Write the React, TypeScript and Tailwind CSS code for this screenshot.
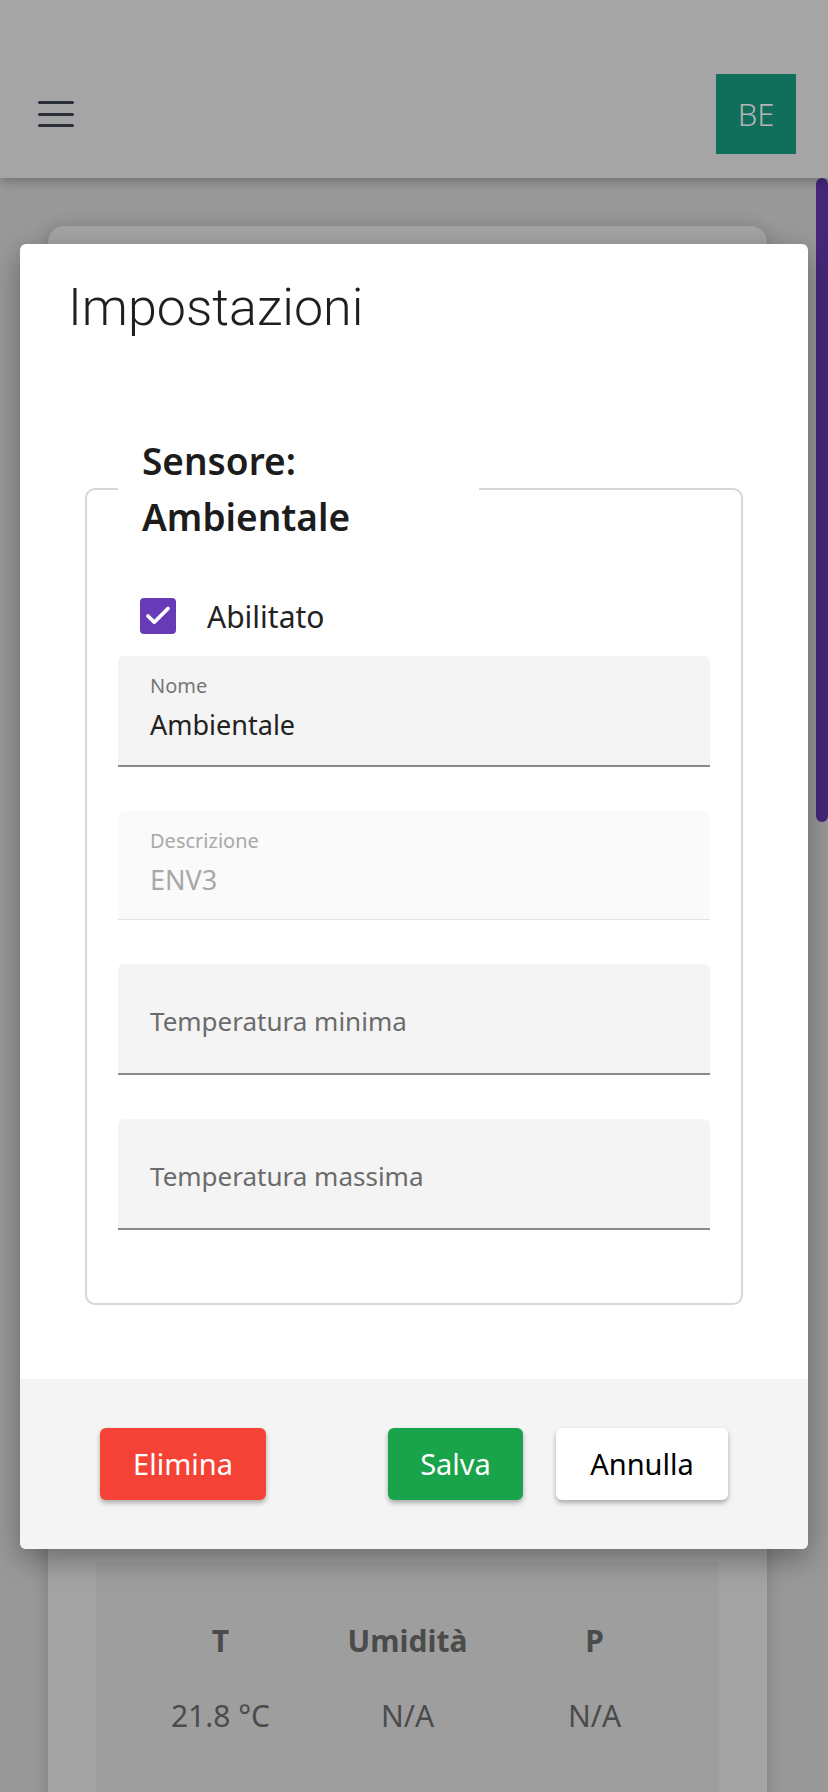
import { Check } from 'lucide-react';

const body = "font-['Noto_Sans',sans-serif]";

function Field({ label, value, disabled }: { label?: string; value?: string; disabled?: boolean }) {
  if (!label) {
    return (
      <div className="h-[111px] rounded-t-md bg-[#f4f4f4] border-b-2 border-[#8a8a8a] flex items-center pt-[4px] px-[32px]">
        <span className="text-[26px] leading-[32px] text-[#6b6b6b]">{value}</span>
      </div>
    );
  }
  return (
    <div
      className={
        disabled
          ? 'h-[109px] rounded-t-md bg-[#fafafa] border-b border-[#e2e2e2] px-[32px] pt-[20px]'
          : 'h-[111px] rounded-t-md bg-[#f4f4f4] border-b-2 border-[#8a8a8a] px-[32px] pt-[20px]'
      }
    >
      <div className={disabled ? 'text-[20px] leading-[20px] text-[#a8a8a8]' : 'text-[20px] leading-[20px] text-[#777777]'}>
        {label}
      </div>
      <div className={disabled ? 'mt-[13px] text-[27px] leading-[32px] text-[#a8a8a8]' : 'mt-[13px] text-[27px] leading-[32px] text-[#222222]'}>
        {value}
      </div>
    </div>
  );
}

export default function App() {
  return (
    <div className={`relative h-[1792px] overflow-hidden bg-[#999999] ${body}`}>
      {/* app behind the dialog, dimmed */}
      <header className="relative z-10 h-[178px] bg-[#a5a5a5] shadow-[0_4px_10px_rgba(0,0,0,0.25)] pt-[50px] pl-[38px] pr-[32px] flex items-center justify-between">
        <div className="flex flex-col gap-[8.5px] w-[36px]">
          <span className="h-[3px] rounded-full bg-[#2b303b]" />
          <span className="h-[3px] rounded-full bg-[#2b303b]" />
          <span className="h-[3px] rounded-full bg-[#2b303b]" />
        </div>
        <div className="w-[80px] h-[80px] bg-[#116e5b] flex items-center justify-center text-[31px] font-light text-[#b4b4b4]">
          BE
        </div>
      </header>

      <div className="flex">
        <main className="flex-1 pt-[48px] pl-[48px] pr-[49px]">
          <div className="rounded-t-2xl bg-[#a4a4a4] shadow-[0_0_18px_rgba(0,0,0,0.18)] px-[48px] pt-[1336px]">
            <div className="bg-[#9e9e9e] pt-[56px] pb-[80px]">
              <div className="grid grid-cols-3 w-[561px] mx-auto text-center text-[#4b4b4b]">
                <div className="text-[30px] font-bold">T</div>
                <div className="text-[30px] font-bold">Umidità</div>
                <div className="text-[30px] font-bold">P</div>
                <div className="mt-[30px] text-[30px]">21.8 °C</div>
                <div className="mt-[30px] text-[30px]">N/A</div>
                <div className="mt-[30px] text-[30px]">N/A</div>
              </div>
            </div>
          </div>
        </main>
        <div className="w-[12px]">
          <div className="h-[644px] rounded-full bg-[#45277a]" />
        </div>
      </div>

      {/* dialog */}
      <div className="absolute left-[20px] top-[244px] w-[788px] rounded-md bg-white shadow-[0_10px_30px_rgba(0,0,0,0.35)] overflow-hidden">
        <div className="px-[65px] pt-[35px] pb-[74px]">
          <h2 className="-ml-[17px] font-['Roboto',sans-serif] font-light text-[52px] leading-[58px] text-[#1f1f1f]">
            Impostazioni
          </h2>

          <fieldset className="mt-[96px] rounded-[10px] border-2 border-[#d6d6db] px-[31px] pb-[73px]">
            <legend className="w-[361px] px-[24px] text-[37px] leading-[56px] font-semibold text-[#1c1c1c]">
              Sensore: Ambientale
            </legend>

            <div className="mt-[43px] h-[56px] flex items-center pl-[22px]">
              <span className="w-[36px] h-[36px] rounded-[4px] bg-[#673ab7] flex items-center justify-center">
                <Check className="w-[30px] h-[30px] text-white" strokeWidth={3} />
              </span>
              <span className="ml-[31px] text-[30px] text-[#222222]">Abilitato</span>
            </div>

            <div className="mt-[12px] flex flex-col gap-[44px]">
              <Field label="Nome" value="Ambientale" />
              <Field label="Descrizione" value="ENV3" disabled />
              <Field value="Temperatura minima" />
              <Field value="Temperatura massima" />
            </div>
          </fieldset>
        </div>

        <div className="h-[170px] bg-[#f4f4f4] px-[80px] flex items-center justify-between">
          <button className="w-[166px] h-[72px] rounded-md bg-[#f44336] text-white text-[29px] shadow-[0_3px_5px_rgba(0,0,0,0.3)]">
            Elimina
          </button>
          <div className="flex gap-[33px]">
            <button className="w-[135px] h-[72px] rounded-md bg-[#19a34a] text-white text-[29px] shadow-[0_3px_5px_rgba(0,0,0,0.3)]">
              Salva
            </button>
            <button className="w-[172px] h-[72px] rounded-md bg-white text-black text-[29px] shadow-[0_3px_5px_rgba(0,0,0,0.3)]">
              Annulla
            </button>
          </div>
        </div>
      </div>
    </div>
  );
}
